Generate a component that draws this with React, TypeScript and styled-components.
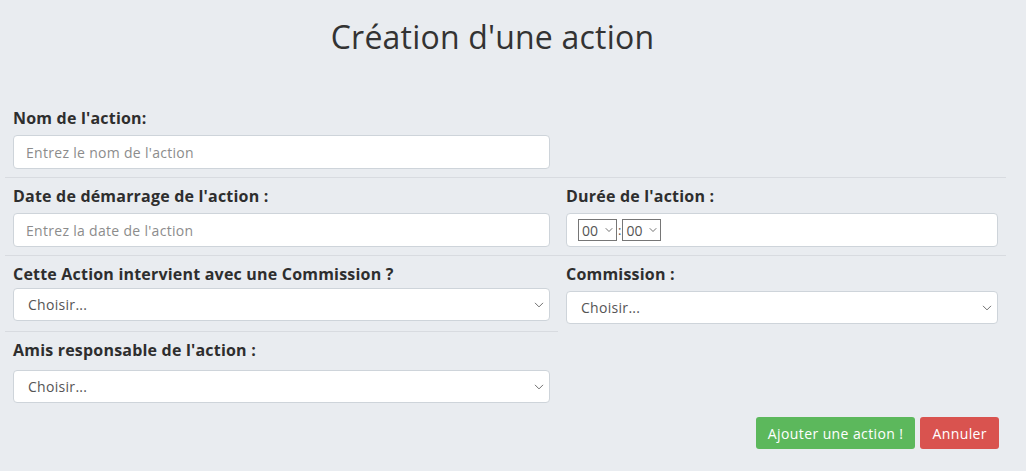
import { FC, ReactNode } from "react";
import styled, { createGlobalStyle } from "styled-components";

const Chevron: FC<{ size?: number; color?: string }> = ({ size = 10, color = "#555" }) => (
  <svg width={size} height={size} viewBox="0 0 16 16" fill="none">
    <path
      d="M2 5l6 6 6-6"
      stroke={color}
      strokeWidth="1.5"
      strokeLinecap="round"
      strokeLinejoin="round"
    />
  </svg>
);

const Select: FC = () => (
  <SelectWrap>
    <BigSelect defaultValue="">
      <option value="">Choisir...</option>
    </BigSelect>
    <ChevronBox>
      <Chevron size={10} color="#666" />
    </ChevronBox>
  </SelectWrap>
);

const TimeSelect: FC = () => (
  <TimeWrap>
    <TimeBox defaultValue="00">
      <option value="00">00</option>
    </TimeBox>
    <TimeChevron>
      <Chevron size={8} color="#444" />
    </TimeChevron>
  </TimeWrap>
);

const Field: FC<{
  label: string;
  divided?: boolean;
  gap?: number;
  children?: ReactNode;
}> = ({ label, divided, gap = 6, children }) => (
  <FieldBox $divided={divided}>
    <Label $gap={gap}>{label}</Label>
    {children}
  </FieldBox>
);

const App: FC = () => {
  return (
    <Page>
      <GlobalStyle />
      <Title>Création d'une action</Title>
      <Form onSubmit={(e) => e.preventDefault()}>
        <Row $divided>
          <Field label="Nom de l'action:">
            <TextInput placeholder="Entrez le nom de l'action" />
          </Field>
          <div />
        </Row>
        <Row $divided>
          <Field label="Date de démarrage de l'action :">
            <TextInput placeholder="Entrez la date de l'action" />
          </Field>
          <Field label="Durée de l'action :">
            <DurationBox>
              <TimeSelect />
              <Colon>:</Colon>
              <TimeSelect />
            </DurationBox>
          </Field>
        </Row>
        <Row>
          <Field label="Cette Action intervient avec une Commission ?" gap={3} divided>
            <Select />
          </Field>
          <Field label="Commission :">
            <Select />
          </Field>
        </Row>
        <Row>
          <Field label="Amis responsable de l'action :" gap={9}>
            <Select />
          </Field>
          <div />
        </Row>
        <Actions>
          <Button $variant="success" type="submit">
            Ajouter une action !
          </Button>
          <Button $variant="danger" type="button">
            Annuler
          </Button>
        </Actions>
      </Form>
    </Page>
  );
};

export default App;

// styles
const GlobalStyle = createGlobalStyle`
  body {
    margin: 0;
    background: #e9ecf0;
    font-family: "Open Sans", "Noto Sans", sans-serif;
    color: #333;
  }
`;

const Page = styled.div`
  width: 1026px;
  min-height: 471px;
`;

const Title = styled.h1`
  margin: 0;
  padding-top: 16px;
  width: 985px;
  text-align: center;
  font-size: 32px;
  letter-spacing: 0.2px;
  line-height: 42px;
  font-weight: 400;
  color: #333;
`;

const Form = styled.form`
  margin-top: 42px;
  padding-left: 5px;
  width: 1001px;
`;

const Row = styled.div<{ $divided?: boolean }>`
  display: grid;
  grid-template-columns: 553px 448px;
  border-bottom: ${(p) => (p.$divided ? "1px solid #d8dbe0" : "none")};
`;

const FieldBox = styled.div<{ $divided?: boolean }>`
  padding: 7px 8px 8px;
  border-bottom: ${(p) => (p.$divided ? "1px solid #d8dbe0" : "none")};
`;

const Label = styled.label<{ $gap: number }>`
  display: block;
  font-size: 16px;
  letter-spacing: 0.2px;
  line-height: 22px;
  font-weight: 700;
  color: #2e2e2e;
  margin-bottom: ${(p) => p.$gap}px;
`;

const TextInput = styled.input`
  display: block;
  box-sizing: border-box;
  width: 100%;
  height: 34px;
  padding: 0 12px;
  border: 1px solid #ced4da;
  border-radius: 4px;
  background: #fff;
  font-family: inherit;
  font-size: 14px;
  letter-spacing: 0.3px;
  color: #555;

  &::placeholder {
    color: #8c8c8c;
  }
`;

const SelectWrap = styled.div`
  position: relative;
`;

const BigSelect = styled.select`
  display: block;
  box-sizing: border-box;
  width: 100%;
  height: 33px;
  padding: 0 36px 0 14px;
  border: 1px solid #ced4da;
  border-radius: 4px;
  background: #fff;
  appearance: none;
  font-family: inherit;
  font-size: 14px;
  letter-spacing: 0.3px;
  color: #555;
`;

const ChevronBox = styled.span`
  position: absolute;
  right: 6px;
  top: 50%;
  transform: translateY(-50%);
  display: flex;
  pointer-events: none;
`;

const DurationBox = styled.div`
  box-sizing: border-box;
  height: 34px;
  display: flex;
  align-items: center;
  padding: 0 11px;
  border: 1px solid #ced4da;
  border-radius: 4px;
  background: #fff;
`;

const TimeWrap = styled.div`
  position: relative;
`;

const TimeBox = styled.select`
  display: block;
  box-sizing: border-box;
  height: 22px;
  width: 39px;
  padding: 0 14px 0 3px;
  border: 1px solid #767676;
  border-radius: 0;
  background: #fff;
  appearance: none;
  font-family: inherit;
  font-size: 14px;
  color: #555;
`;

const TimeChevron = styled.span`
  position: absolute;
  right: 4px;
  top: 50%;
  transform: translateY(-50%);
  display: flex;
  pointer-events: none;
`;

const Colon = styled.span`
  font-size: 13px;
  color: #555;
  margin: 0 1px;
`;

const Actions = styled.div`
  display: flex;
  justify-content: flex-end;
  gap: 5px;
  margin-top: 6px;
  padding-right: 7px;
`;

const Button = styled.button<{ $variant: "success" | "danger" }>`
  height: 32px;
  padding: 0 12px;
  border: none;
  border-radius: 3px;
  background: ${(p) => (p.$variant === "success" ? "#5cb85c" : "#d9534f")};
  color: #fff;
  font-family: inherit;
  font-size: 14px;
  letter-spacing: 0.4px;
  cursor: pointer;
`;
